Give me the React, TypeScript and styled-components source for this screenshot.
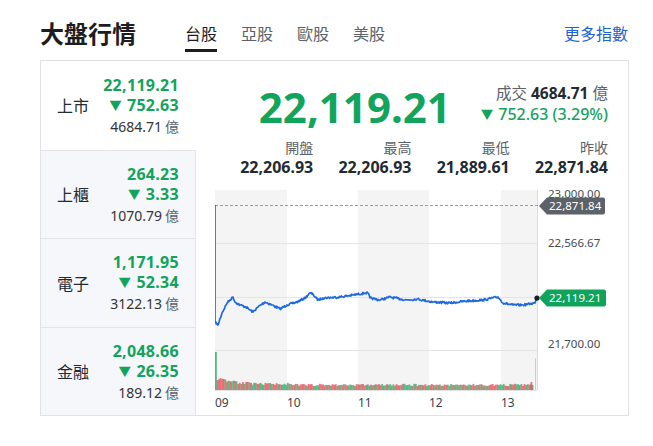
import styled, { createGlobalStyle } from "styled-components";

const GlobalStyle = createGlobalStyle`
  body {
    margin: 0;
    background: #fff;
    font-family: "Noto Sans", "Noto Sans CJK TC", sans-serif;
    color: #232a31;
  }
`;

const GREEN = "#12a35d";

const Page = styled.div`
  width: 653px;
  height: 446px;
`;

const Header = styled.header`
  display: flex;
  align-items: flex-start;
  height: 60px;
  box-sizing: border-box;
  padding: 20px 25px 0 40px;
`;

const Title = styled.h1`
  margin: 0;
  font-size: 24px;
  line-height: 26px;
  font-weight: 700;
  font-family: "Noto Sans CJK TC", sans-serif;
  color: #1d1d1f;
`;

const Tabs = styled.nav`
  display: flex;
  gap: 24px;
  margin-left: 49px;
`;

const Tab = styled.span<{ $active?: boolean }>`
  font-family: "Noto Sans CJK TC", sans-serif;
  font-size: 16px;
  line-height: 26px;
  padding-bottom: 3px;
  border-bottom: 3px solid ${(p) => (p.$active ? "#1d1d1f" : "transparent")};
  color: ${(p) => (p.$active ? "#1d1d1f" : "#5b636a")};
`;

const MoreLink = styled.a`
  margin-left: auto;
  font-family: "Noto Sans CJK TC", sans-serif;
  font-size: 16px;
  line-height: 26px;
  color: #1f5fd8;
  text-decoration: none;
`;

const Board = styled.section`
  margin-left: 40px;
  width: 589px;
  height: 356px;
  box-sizing: border-box;
  border: 1px solid #e2e2e2;
  display: grid;
  grid-template-columns: 155px 1fr;
`;

const SideList = styled.div`
  display: grid;
  grid-template-rows: repeat(4, 1fr);
`;

const SideRow = styled.div<{ $active?: boolean }>`
  display: flex;
  align-items: center;
  justify-content: space-between;
  box-sizing: border-box;
  padding: 0 16px 0 16px;
  background: ${(p) => (p.$active ? "#fff" : "#f5f7fa")};
  border-right: 1px solid ${(p) => (p.$active ? "transparent" : "#e2e4e8")};
  & + & {
    border-top: 1px solid #e2e4e8;
  }
`;

const RowLabel = styled.span`
  font-family: "Noto Sans CJK TC", sans-serif;
  font-size: 16px;
  color: #232a31;
`;

const RowNums = styled.div`
  display: flex;
  flex-direction: column;
  align-items: flex-end;
`;

const RowPrice = styled.span`
  font-size: 16px;
  line-height: 20px;
  font-weight: 700;
  letter-spacing: 0.3px;
  color: ${GREEN};
`;

const Arrow = styled.span`
  font-size: 12.5px;
  margin-right: 5px;
  position: relative;
  top: -1px;
`;

const RowVolume = styled.span`
  font-size: 14px;
  line-height: 19px;
  color: #333;
  span {
    font-family: "Noto Sans CJK TC", sans-serif;
    color: #5b636a;
    margin-left: 3px;
  }
`;

const Main = styled.div`
  padding: 20px 20px 0 19px;
  display: flex;
  flex-direction: column;
  overflow: hidden;
`;

const QuoteTop = styled.div`
  display: flex;
  align-items: center;
  justify-content: flex-end;
  gap: 30px;
  height: 52px;
`;

const BigPrice = styled.span`
  font-size: 42px;
  line-height: 52px;
  font-weight: 700;
  color: ${GREEN};
`;

const QuoteSide = styled.div`
  display: flex;
  flex-direction: column;
  align-items: flex-end;
  margin-bottom: 6px;
`;

const Turnover = styled.span`
  font-size: 15.5px;
  line-height: 21px;
  color: #5b636a;
  font-family: "Noto Sans CJK TC", sans-serif;
  b {
    font-family: "Noto Sans", sans-serif;
    color: #232a31;
    margin: 0 4px;
  }
`;

const Change = styled.span`
  font-size: 16px;
  line-height: 21px;
  font-weight: 500;
  color: ${GREEN};
`;

const Stats = styled.div`
  display: grid;
  grid-template-columns: repeat(4, 1fr);
  margin-top: 5px;
`;

const Stat = styled.div`
  display: flex;
  flex-direction: column;
  align-items: flex-end;
`;

const StatLabel = styled.span`
  font-family: "Noto Sans CJK TC", sans-serif;
  font-size: 14px;
  line-height: 19px;
  color: #5b636a;
`;

const StatValue = styled.span`
  font-size: 16px;
  line-height: 20px;
  font-weight: 700;
  color: #232a31;
`;

const ChartSvg = styled.svg`
  display: block;
  margin-top: 9px;
  margin-right: -20px;
  font-family: "Noto Sans", sans-serif;
`;

function makeRand(seed: number) {
  let s = seed;
  return () => {
    s = (s * 16807) % 2147483647;
    return (s - 1) / 2147483646;
  };
}

const keyPoints: [number, number][] = [
  [215, 205], [215, 322], [218, 325], [222, 313], [227, 303], [230, 300], [233, 297],
  [235, 302], [240, 305], [246, 307], [250, 310], [253, 312], [258, 307], [265, 302],
  [272, 305], [280, 309], [287, 305], [297, 302], [305, 298], [310, 293], [313, 294],
  [315, 297], [318, 300], [323, 298], [340, 297], [353, 295], [365, 293], [368, 293],
  [370, 298], [380, 300], [390, 297], [400, 299], [407, 300], [417, 299], [433, 302],
  [450, 303], [467, 301], [483, 300], [498, 297], [503, 303], [513, 305], [523, 305],
  [535, 303], [537, 298],
];

function buildPricePath() {
  const rand = makeRand(7);
  const out: string[] = [`M215 205`, `L215 322`];
  for (let i = 2; i < keyPoints.length; i++) {
    const [x0, y0] = keyPoints[i - 1];
    const [x1, y1] = keyPoints[i];
    const steps = Math.max(1, Math.round((x1 - x0) * 1.5));
    for (let k = 1; k <= steps; k++) {
      const t = k / steps;
      const x = x0 + (x1 - x0) * t;
      const j = k === steps ? 0 : (rand() - 0.5) * 2.2;
      out.push(`L${x.toFixed(1)} ${(y0 + (y1 - y0) * t + j).toFixed(1)}`);
    }
  }
  return out.join(" ");
}

function buildVolume() {
  const rand = makeRand(11);
  const bars: { x: number; h: number; c: string }[] = [];
  for (let x = 216.5; x < 533; x += 1.6) {
    let base = 4;
    if (x < 226) base = 10;
    else if (x < 236) base = 8;
    else if (x < 250) base = 6;
    else if (x < 290) base = 5;
    const h = base + rand() * 2.2;
    const c = rand() < 0.55 ? "#ee4d57" : "#2fae6e";
    bars.push({ x, h, c });
  }
  bars.push({ x: 530.5, h: 8, c: "#ee4d57" });
  return bars;
}

const pricePath = buildPricePath();
const volumeBars = buildVolume();

const side = [
  { label: "上市", price: "22,119.21", change: "752.63", vol: "4684.71" },
  { label: "上櫃", price: "264.23", change: "3.33", vol: "1070.79" },
  { label: "電子", price: "1,171.95", change: "52.34", vol: "3122.13" },
  { label: "金融", price: "2,048.66", change: "26.35", vol: "189.12" },
];

const stats = [
  { label: "開盤", value: "22,206.93" },
  { label: "最高", value: "22,206.93" },
  { label: "最低", value: "21,889.61" },
  { label: "昨收", value: "22,871.84" },
];

function Chart() {
  return (
    <ChartSvg width={413} height={229} viewBox="215 186 413 229">
      <rect x={215} y={190} width={72} height={200} fill="#f4f4f4" />
      <rect x={358} y={190} width={71} height={200} fill="#f4f4f4" />
      <rect x={501} y={190} width={36} height={200} fill="#f4f4f4" />
      {[243, 297, 350].map((y) => (
        <line key={y} x1={215} x2={537} y1={y + 0.5} y2={y + 0.5} stroke="#e4e4e4" />
      ))}
      <line x1={537.5} x2={537.5} y1={190} y2={390} stroke="#dcdcdc" />
      <line x1={215} x2={537} y1={390.5} y2={390.5} stroke="#e2e2e2" />
      {volumeBars.map((b, i) => (
        <rect key={i} x={b.x} y={390 - b.h} width={1.8} height={b.h} fill={b.c} opacity={0.8} />
      ))}
      <rect x={215} y={352} width={1.8} height={38} fill="#2fae6e" opacity={0.85} />
      <rect x={535} y={358} width={1} height={32} fill="#f0505a" opacity={0.35} />
      <line x1={215} x2={540} y1={205.5} y2={205.5} stroke="#9a9a9a" strokeDasharray="3 2" />
      <path d={pricePath} fill="none" stroke="#1e6be0" strokeWidth={1.7} strokeLinejoin="round" />
      <circle cx={537} cy={298} r={2.6} fill="#1d1d1f" />

      <g fontSize={11.5} fill="#464c52">
        <text x={548} y={198}>23,000.00</text>
        <text x={548} y={247}>22,566.67</text>
        <text x={548} y={348}>21,700.00</text>
      </g>

      <path d="M539 206 L547 197.5 L603 197.5 Q605 197.5 605 199.5 L605 212.5 Q605 214.5 603 214.5 L547 214.5 Z" fill="#5b6269" />
      <text x={549} y={210} fontSize={11.5} fill="#fff">22,871.84</text>

      <path d="M539 298 L547 289.5 L604 289.5 Q606 289.5 606 291.5 L606 304.5 Q606 306.5 604 306.5 L547 306.5 Z" fill="#10a35b" />
      <text x={549} y={302} fontSize={11.5} fill="#fff">22,119.21</text>

      <g fontSize={12} fill="#3a3f45">
        <text x={215} y={407}>09</text>
        <text x={287} y={407}>10</text>
        <text x={358} y={407}>11</text>
        <text x={429} y={407}>12</text>
        <text x={501} y={407}>13</text>
      </g>
    </ChartSvg>
  );
}

export default function App() {
  return (
    <Page>
      <GlobalStyle />
      <Header>
        <Title>大盤行情</Title>
        <Tabs>
          <Tab $active>台股</Tab>
          <Tab>亞股</Tab>
          <Tab>歐股</Tab>
          <Tab>美股</Tab>
        </Tabs>
        <MoreLink href="#">更多指數</MoreLink>
      </Header>
      <Board>
        <SideList>
          {side.map((s, i) => (
            <SideRow key={s.label} $active={i === 0}>
              <RowLabel>{s.label}</RowLabel>
              <RowNums>
                <RowPrice>{s.price}</RowPrice>
                <RowPrice>
                  <Arrow>▼</Arrow>
                  {s.change}
                </RowPrice>
                <RowVolume>
                  {s.vol}
                  <span>億</span>
                </RowVolume>
              </RowNums>
            </SideRow>
          ))}
        </SideList>
        <Main>
          <QuoteTop>
            <BigPrice>22,119.21</BigPrice>
            <QuoteSide>
              <Turnover>
                成交<b>4684.71</b>億
              </Turnover>
              <Change>
                <Arrow>▼</Arrow>752.63 (3.29%)
              </Change>
            </QuoteSide>
          </QuoteTop>
          <Stats>
            {stats.map((s) => (
              <Stat key={s.label}>
                <StatLabel>{s.label}</StatLabel>
                <StatValue>{s.value}</StatValue>
              </Stat>
            ))}
          </Stats>
          <Chart />
        </Main>
      </Board>
    </Page>
  );
}
